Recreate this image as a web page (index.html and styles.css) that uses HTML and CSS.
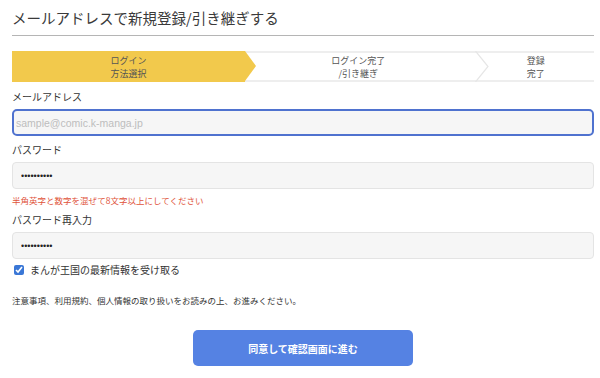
FILE: index.html
```html
<!DOCTYPE html>
<html lang="ja">
<head>
<meta charset="utf-8">
<link rel="stylesheet" href="styles.css">
</head>
<body>
<div class="page">
  <h1 class="title">メールアドレスで新規登録/引き継ぎする</h1>
  <div class="steps">
    <div class="step step-active">
      <span>ログイン<br>方法選択</span>
    </div>
    <div class="step step-mid">
      <span>ログイン完了<br>/引き継ぎ</span>
      <svg class="chevron" width="14" height="31" viewBox="0 0 14 31"><polyline points="0.5,0 13,15.5 0.5,31" fill="none" stroke="#e6e6e6" stroke-width="1.2"/></svg>
    </div>
    <div class="step step-last">
      <span>登録<br>完了</span>
    </div>
  </div>

  <form class="form">
    <label class="label">メールアドレス</label>
    <input class="input input-focus" type="text" placeholder="sample@comic.k-manga.jp">

    <label class="label">パスワード</label>
    <input class="input" type="password" value="abcdefghij">
    <p class="error">半角英字と数字を混ぜて8文字以上にしてください</p>

    <label class="label">パスワード再入力</label>
    <input class="input" type="password" value="abcdefghij">

    <label class="check">
      <input type="checkbox" checked>
      <span>まんが王国の最新情報を受け取る</span>
    </label>

    <p class="notice">注意事項、利用規約、個人情報の取り扱いをお読みの上、お進みください。</p>

    <div class="actions">
      <button type="button" class="btn">同意して確認画面に進む</button>
    </div>
  </form>
</div>
</body>
</html>
```

FILE: styles.css
```css
* { box-sizing: border-box; }
html, body {
  margin: 0;
  padding: 0;
  background: #fff;
}
body {
  font-family: "Noto Sans CJK JP", "Noto Sans", sans-serif;
  color: #333;
}
.page {
  padding: 0 6px 0 12px;
}
.title {
  margin: 0;
  font-size: 14.5px;
  font-weight: 400;
  line-height: 20px;
  padding: 8px 0 7px;
  border-bottom: 1px solid #b5b5b5;
  color: #3a3a3a;
}
.steps {
  display: flex;
  margin-top: 15px;
  height: 31px;
}
.step {
  position: relative;
  display: flex;
  align-items: center;
  justify-content: center;
  text-align: center;
  font-size: 9px;
  line-height: 13px;
  color: #555;
}
.step-active {
  flex: 0 0 40%;
  background: #f2c94c;
  z-index: 2;
}
.step-active::after {
  content: "";
  position: absolute;
  right: -11px;
  top: 0;
  border-left: 11px solid #f2c94c;
  border-top: 15.5px solid transparent;
  border-bottom: 15.5px solid transparent;
}
.step-mid {
  flex: 0 0 40%;
  border-top: 2px solid #eeeeee;
  border-bottom: 2px solid #eeeeee;
  padding-left: 0;
  padding-right: 6px;
}
.step-last {
  flex: 1 1 auto;
  border-top: 2px solid #eeeeee;
  border-bottom: 2px solid #eeeeee;
  padding-left: 0;
}
.chevron {
  position: absolute;
  right: -11px;
  top: -2px;
  z-index: 1;
}
.form {
  display: flex;
  flex-direction: column;
  margin-top: 8px;
}
.label {
  font-size: 10px;
  line-height: 14px;
  color: #333;
}
.input {
  margin-top: 5px;
  margin-bottom: 7px;
  height: 27px;
  width: 100%;
  border: 1px solid #e4e4e4;
  border-radius: 4px;
  background: #f6f6f6;
  padding: 0 8px;
  font-family: "Liberation Sans", Arial, sans-serif;
  font-size: 9px;
  color: #222;
  outline: none;
}
.input-focus {
  border: 2px solid #4f72cf;
  border-radius: 5px;
  padding: 0 2px;
  font-size: 10.5px;
}
.input-focus::placeholder {
  color: #bdbdbd;
}
.error {
  margin: -2px 0 7px;
  font-size: 8.5px;
  line-height: 12px;
  color: #e0533a;
}
.check {
  display: flex;
  align-items: center;
  gap: 6px;
  margin-top: -3px;
  font-size: 10px;
  line-height: 14px;
  color: #333;
}
.check input {
  margin: 0 0 0 2px;
  width: 10px;
  height: 10px;
  accent-color: #3a77d6;
}
.notice {
  margin: 17px 0 0;
  font-size: 8.5px;
  line-height: 12px;
  color: #333;
}
.actions {
  display: flex;
  justify-content: center;
  margin-top: 24px;
}
.btn {
  width: 220px;
  height: 36px;
  border: none;
  border-radius: 5px;
  background: #5582e3;
  color: #fff;
  font-family: "Noto Sans CJK JP", sans-serif;
  font-size: 10px;
  font-weight: 700;
}
```
